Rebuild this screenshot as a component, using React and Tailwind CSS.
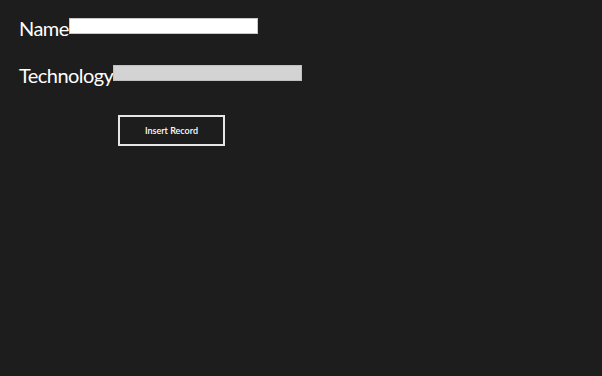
export default function App() {
  return (
    <div
      className="w-[602px] h-[376px] bg-[#1d1d1d] text-white pt-[16px] pl-[19px]"
      style={{ fontFamily: 'Lato, "Open Sans", sans-serif' }}
    >
      <div className="flex items-start h-[24px]">
        <span className="text-[20px] leading-[25px] tracking-[-0.55px]">Name</span>
        <div className="mt-[2px] w-[189px] h-[16px] bg-white border border-[#c8c8c8]" />
      </div>

      <div className="flex items-start h-[24px] mt-[23px]">
        <span className="text-[20px] leading-[25px] tracking-[-0.55px]">Technology</span>
        <div className="mt-[2px] w-[189px] h-[16px] bg-[#d3d3d3] border border-[#c0c0c0]" />
      </div>

      <button className="ml-[99px] mt-[28px] w-[107px] h-[31px] border-2 border-[#e6e6e6] bg-transparent text-[9px] font-semibold text-white flex items-center justify-center">
        Insert Record
      </button>
    </div>
  );
}
